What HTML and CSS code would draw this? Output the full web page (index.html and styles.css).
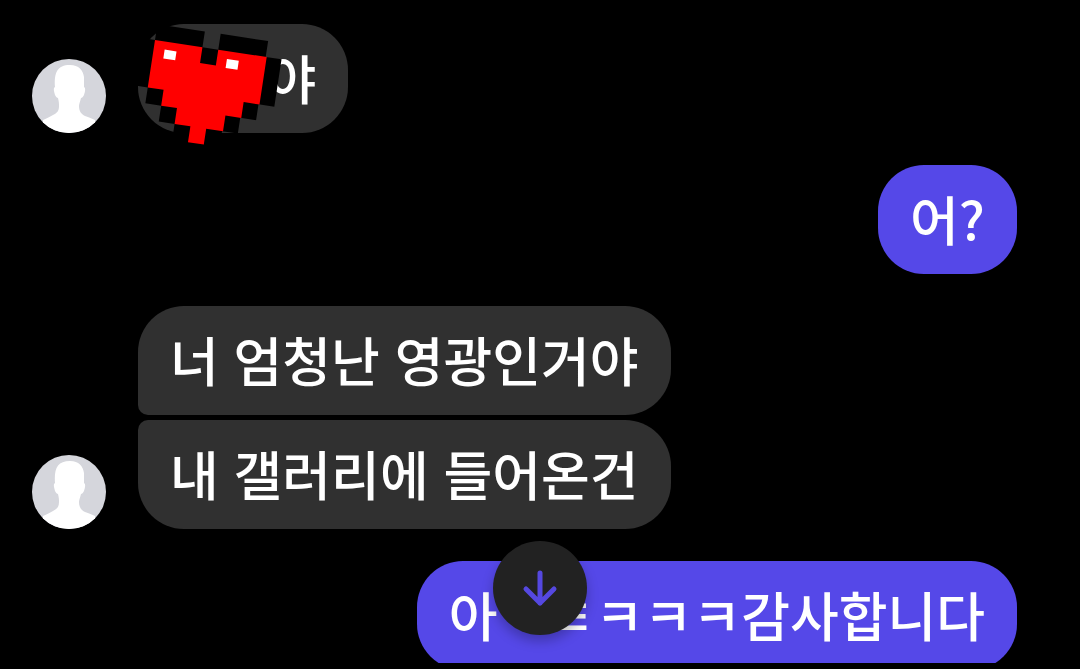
FILE: index.html
```html
<!DOCTYPE html>
<html lang="ko">
<head>
  <meta charset="UTF-8">
  <meta name="viewport" content="width=device-width, initial-scale=1">
  <title>Chat</title>
  <link rel="stylesheet" href="styles.css">
</head>
<body>
  <svg class="defs" width="0" height="0" aria-hidden="true">
    <symbol id="person" viewBox="0 0 74 74">
      <rect width="74" height="74" fill="#d5d6dc"/>
      <path fill="#fff" d="M23 28C22 14 25 6 38 6c9 0 13 5 14 12v10c2 1 1 5 0 8-1 2-2 3-3 3-1 4-2 6-2 8 0 5 2 8 6 10 4 1 7 3 10 4v13H11V61c4-2 7-3 10-5 4-2 6-4 6-9 0-2 0-4-1-8-1 0-2-1-3-3-1-4-2-7 0-8z"/>
    </symbol>
  </svg>

  <main class="chat">
    <div class="row received">
      <svg class="avatar" role="img" aria-label="Profile"><use href="#person"/></svg>
      <div class="messages">
        <p class="bubble">친구야
          <svg class="heart" viewBox="0 0 160 140" aria-hidden="true">
            <g transform="translate(17 16) rotate(8.67)">
              <path fill="#000" d="M0-16H48V0H64V-16H112V0H128V48H112V64H96V80H80V96H64V112H48V96H32V80H16V64H0V48H-16V0H0z"/>
              <path fill="#f00" d="M0 0H48V16H64V0H113V48H97V64H81V80H64V96H48V80H32V64H16V48H0z"/>
              <path fill="#fff" d="M11 8h12v9H11zM74 8h12v9H74z"/>
            </g>
          </svg>
        </p>
      </div>
    </div>

    <div class="row sent">
      <p class="bubble">어?</p>
    </div>

    <div class="row received">
      <svg class="avatar" role="img" aria-label="Profile"><use href="#person"/></svg>
      <div class="messages">
        <p class="bubble first">너 엄청난 영광인거야</p>
        <p class="bubble last">내 갤러리에 들어온건</p>
      </div>
    </div>

    <div class="row sent">
      <p class="bubble">아ㅋㅌㅋㅋㅋ감사합니다</p>
    </div>

    <button class="scroll-down" type="button" aria-label="Scroll to bottom">
      <svg viewBox="0 0 40 40" aria-hidden="true">
        <path d="M20 5v30M6 21l14 14 14-14"/>
      </svg>
    </button>
  </main>
</body>
</html>
```
FILE: styles.css
```css
* {
  box-sizing: border-box;
}

body {
  height: 100vh;
  margin: 0;
  padding-bottom: 6px;
  background: #000;
  color: #fff;
  font-family: "Noto Sans CJK KR", sans-serif;
  font-size: 53px;
  font-weight: 500;
  line-height: 77px;
}

.defs {
  position: absolute;
}

.chat {
  position: relative;
  display: flex;
  flex-direction: column;
  gap: 32px;
  height: 100%;
  padding: 24px 63px 0 32px;
  overflow: hidden;
}

.row {
  display: flex;
  flex-shrink: 0;
  align-items: flex-end;
  gap: 32px;
}

.sent {
  justify-content: flex-end;
}

.messages {
  display: flex;
  flex-direction: column;
  align-items: flex-start;
  gap: 5px;
}

.avatar {
  flex-shrink: 0;
  width: 74px;
  height: 74px;
  border-radius: 50%;
}

.bubble {
  position: relative;
  margin: 0;
  padding: 15px 32px 17px;
  border-radius: 46px;
  background: #303030;
}

.sent .bubble {
  background: #5548e8;
}

.first {
  border-bottom-left-radius: 10px;
}

.last {
  border-top-left-radius: 10px;
}

.heart {
  position: absolute;
  top: 0;
  left: 0;
  width: 160px;
  height: 140px;
  overflow: visible;
}

.scroll-down {
  position: absolute;
  bottom: 28px;
  left: 50%;
  display: flex;
  align-items: center;
  justify-content: center;
  width: 94px;
  height: 94px;
  padding: 0;
  transform: translateX(-50%);
  border: none;
  border-radius: 50%;
  background: #222;
  box-shadow: 0 6px 12px rgba(0, 0, 0, 0.25);
  cursor: pointer;
}

.scroll-down svg {
  width: 40px;
  height: 40px;
  fill: none;
  stroke: #5548e0;
  stroke-width: 5;
  stroke-linecap: round;
  stroke-linejoin: round;
}
```
